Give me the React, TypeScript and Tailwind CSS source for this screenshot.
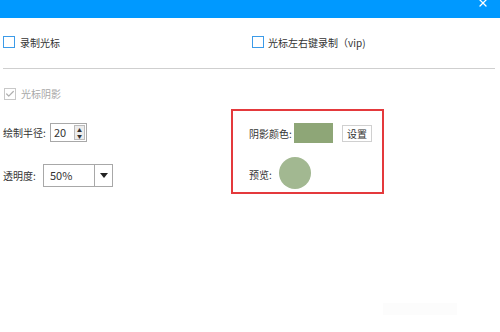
import { Check, X } from 'lucide-react'

const font = { fontFamily: '"Noto Sans CJK SC", "Noto Sans", sans-serif' }

function Box({ checked, disabled }: { checked?: boolean; disabled?: boolean }) {
  return (
    <span
      className={
        'flex h-[12px] w-[12px] shrink-0 items-center justify-center border bg-white ' +
        (disabled ? 'border-[#c8c8c8]' : 'border-[#3c9be8]')
      }
    >
      {checked && <Check className="h-[10px] w-[10px] text-[#b0b0b0]" strokeWidth={3} />}
    </span>
  )
}

export default function App() {
  return (
    <div className="relative h-[332px] w-[500px] overflow-hidden bg-white text-[10px] text-[#333]" style={font}>
      {/* title bar */}
      <div className="flex h-[18px] items-start justify-end bg-[#0099ff] pr-[11px]">
        <X className="-mt-[3px] h-[12px] w-[12px] text-white" strokeWidth={2.5} />
      </div>

      {/* record options */}
      <div className="flex h-[50px] items-center pb-[2px]">
        <label className="flex w-[252px] items-center gap-[5px] pl-[3px]">
          <Box />
          <span>录制光标</span>
        </label>
        <label className="flex items-center gap-[4px]">
          <Box />
          <span>光标左右键录制（vip)</span>
        </label>
      </div>
      <div className="mx-[3px] h-px w-[492px] bg-[#cfcfcf]" />

      {/* shadow */}
      <div className="flex items-center gap-[5px] pl-[4px] pt-[17px] text-[#a8a8a8]">
        <Box checked disabled />
        <span>光标阴影</span>
      </div>

      <div className="flex pt-[8px]">
        <div className="flex w-[231px] flex-col pl-[3px] pt-[14px]">
          <div className="flex h-[19px] items-center">
            <span className="w-[47px]">绘制半径:</span>
            <div className="flex h-[19px] w-[37px] items-center border border-[#a8a8a8] bg-white">
              <span className="flex-1 pl-[3px] text-[11px]">20</span>
              <div className="mr-[1px] flex h-[15px] w-[11px] flex-col border border-[#bbb] bg-[#ececec]">
                <span className="flex flex-1 items-center justify-center text-[5px] leading-none text-[#333]">▲</span>
                <span className="flex flex-1 items-center justify-center text-[5px] leading-none text-[#333]">▼</span>
              </div>
            </div>
          </div>
          <div className="mt-[22px] flex h-[23px] items-center">
            <span className="w-[40px]">透明度:</span>
            <div className="flex h-[23px] w-[70px] items-center border border-[#a8a8a8] bg-white">
              <span className="flex-1 pl-[6px] text-[11px]">50%</span>
              <div className="flex h-full w-[18px] items-center justify-center border-l border-[#a8a8a8]">
                <span className="h-0 w-0 border-x-[4px] border-t-[5px] border-x-transparent border-t-[#222]" />
              </div>
            </div>
          </div>
        </div>

        <div className="flex h-[85px] w-[153px] flex-col border-2 border-[#e4393c] pl-[16px] pt-[12px]">
          <div className="flex h-[20px] items-center">
            <span className="w-[45px]">阴影颜色:</span>
            <span className="h-[20px] w-[39px] bg-[#8ea677]" />
            <span className="ml-[9px] flex h-[17px] w-[30px] items-center justify-center border border-[#d0d0d0] bg-white">设置</span>
          </div>
          <div className="mt-[14px] flex items-center">
            <span className="w-[30px] pt-[2px]">预览:</span>
            <span className="h-[32px] w-[32px] rounded-full bg-[#a2b891]" />
          </div>
        </div>
      </div>

      <div className="absolute left-[383px] top-[303px] h-[12px] w-[74px] bg-[#fcfcfc]" />
    </div>
  )
}
